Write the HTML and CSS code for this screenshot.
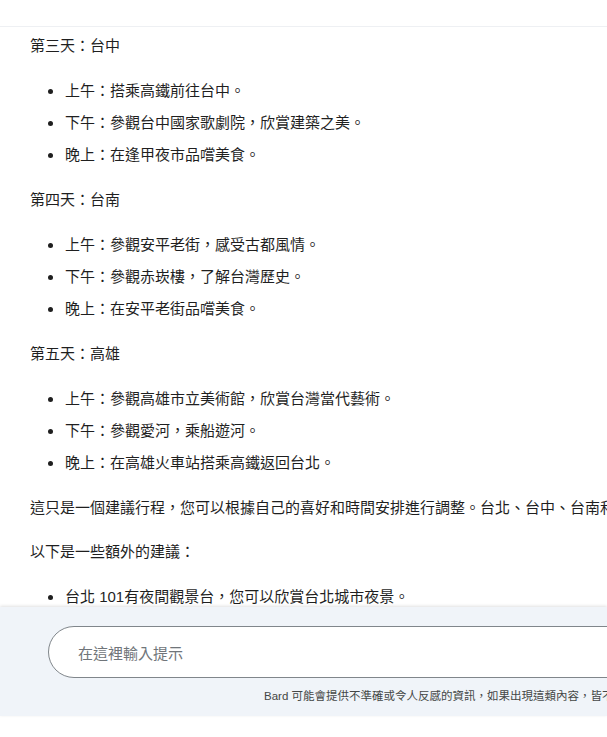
FILE: index.html
```html
<!DOCTYPE html>
<html lang="zh-Hant">
<head>
<meta charset="utf-8">
<title>Bard</title>
<link rel="stylesheet" href="styles.css">
</head>
<body>
<div class="app">
  <header class="topbar"></header>
  <main class="chat">
    <div class="answer">
      <p>第三天：台中</p>
      <ul>
        <li>上午：搭乘高鐵前往台中。</li>
        <li>下午：參觀台中國家歌劇院，欣賞建築之美。</li>
        <li>晚上：在逢甲夜市品嚐美食。</li>
      </ul>
      <p>第四天：台南</p>
      <ul>
        <li>上午：參觀安平老街，感受古都風情。</li>
        <li>下午：參觀赤崁樓，了解台灣歷史。</li>
        <li>晚上：在安平老街品嚐美食。</li>
      </ul>
      <p>第五天：高雄</p>
      <ul>
        <li>上午：參觀高雄市立美術館，欣賞台灣當代藝術。</li>
        <li>下午：參觀愛河，乘船遊河。</li>
        <li>晚上：在高雄火車站搭乘高鐵返回台北。</li>
      </ul>
      <p>這只是一個建議行程，您可以根據自己的喜好和時間安排進行調整。台北、台中、台南和高雄都是台灣熱門的旅遊城市，有許多值得一遊的景點。</p>
      <p>以下是一些額外的建議：</p>
      <ul>
        <li>台北 101有夜間觀景台，您可以欣賞台北城市夜景。</li>
        <li>台中有許多特色咖啡廳，您可以品嚐台灣咖啡。</li>
      </ul>
    </div>
  </main>
  <footer class="composer">
    <div class="prompt">在這裡輸入提示</div>
    <p class="disclaimer">Bard 可能會提供不準確或令人反感的資訊，如果出現這類內容，皆不代表 Google 的觀點。</p>
  </footer>
</div>
</body>
</html>
```
FILE: styles.css
```css
* { box-sizing: border-box; }
html, body {
  margin: 0;
  padding: 0;
  background: #ffffff;
}
body {
  width: 607px;
  height: 737px;
  overflow: hidden;
  font-family: "Liberation Sans", "Noto Sans CJK TC", sans-serif;
  color: #1f1f1f;
}
.app {
  display: flex;
  flex-direction: column;
  height: 737px;
}
.topbar {
  height: 27px;
  flex: none;
  border-bottom: 1px solid #eef0f3;
}
.chat {
  height: 580px;
  flex: none;
  overflow: hidden;
  padding: 7px 0 0 30px;
}
.answer {
  width: 900px;
  font-size: 15px;
  line-height: 24px;
}
.answer p {
  margin: 0;
  white-space: nowrap;
}
.answer p + p {
  margin-top: 20px;
}
.answer ul {
  margin: 21px 0;
  padding: 0 0 0 18px;
  list-style: none;
}
.answer li {
  display: flex;
  align-items: center;
  white-space: nowrap;
}
.answer li + li {
  margin-top: 8px;
}
.answer li::before {
  content: "";
  flex: none;
  width: 5px;
  height: 5px;
  border-radius: 50%;
  background: #1f1f1f;
  margin-right: 12px;
}
.composer {
  flex: none;
  height: 109px;
  background: #f0f4f9;
  box-shadow: 0 -1px 3px rgba(0, 0, 0, 0.12);
  padding: 19px 0 0 48px;
  position: relative;
  width: 607px;
  overflow: hidden;
}
.prompt {
  width: 760px;
  height: 52px;
  border: 1px solid #80868b;
  border-radius: 26px;
  background: #ffffff;
  display: flex;
  align-items: center;
  padding-left: 29px;
  font-size: 15px;
  color: #70757a;
}
.disclaimer {
  margin: 11px 0 0 216px;
  font-size: 11.5px;
  line-height: 14px;
  color: #444746;
  white-space: nowrap;
}
```
